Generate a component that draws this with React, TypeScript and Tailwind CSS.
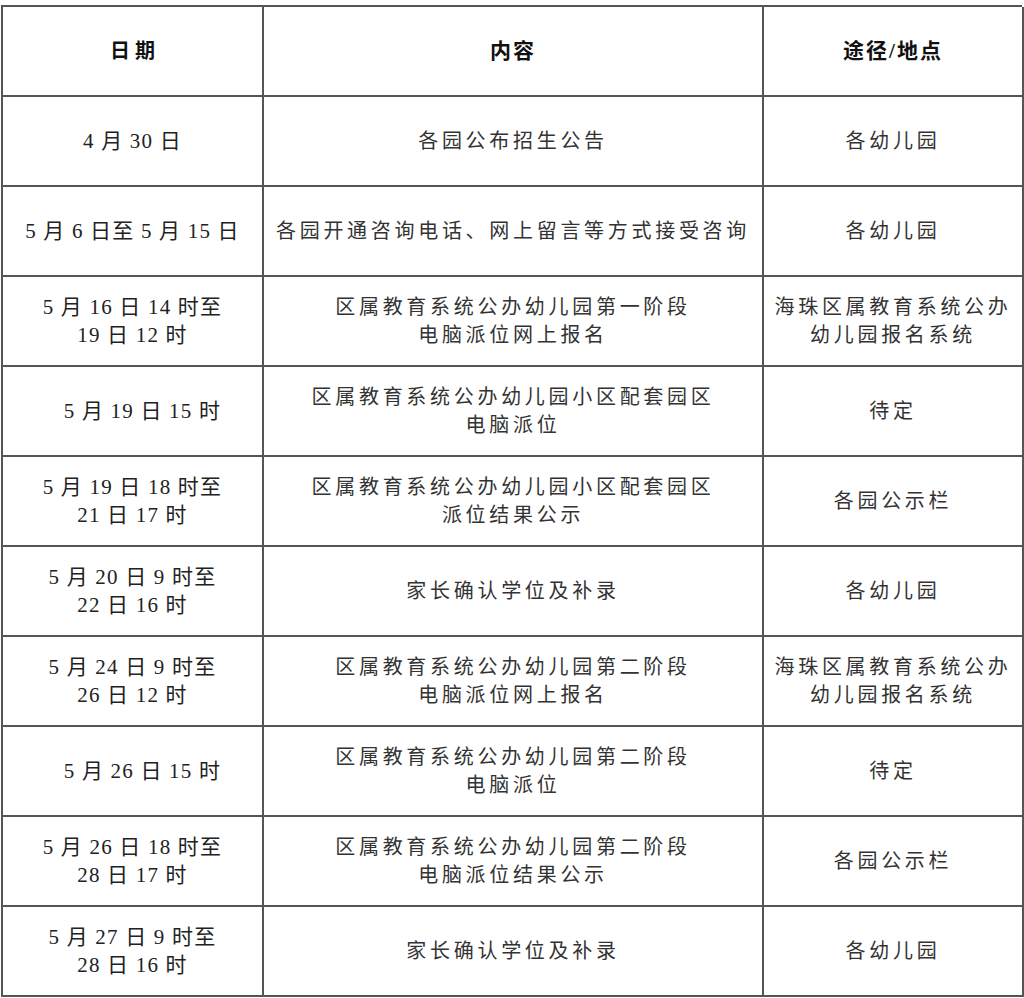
import React from "react";

type Row = { date: string[]; content: string[]; place: string[]; indent?: boolean };

const rows: Row[] = [
  { date: ["4 月 30 日"], content: ["各园公布招生公告"], place: ["各幼儿园"] },
  {
    date: ["5 月 6 日至 5 月 15 日"],
    content: ["各园开通咨询电话、网上留言等方式接受咨询"],
    place: ["各幼儿园"],
  },
  {
    date: ["5 月 16 日 14 时至", "19 日 12 时"],
    content: ["区属教育系统公办幼儿园第一阶段", "电脑派位网上报名"],
    place: ["海珠区属教育系统公办", "幼儿园报名系统"],
  },
  {
    date: ["5 月 19 日 15 时"],
    content: ["区属教育系统公办幼儿园小区配套园区", "电脑派位"],
    place: ["待定"],
    indent: true,
  },
  {
    date: ["5 月 19 日 18 时至", "21 日 17 时"],
    content: ["区属教育系统公办幼儿园小区配套园区", "派位结果公示"],
    place: ["各园公示栏"],
  },
  {
    date: ["5 月 20 日 9 时至", "22 日 16 时"],
    content: ["家长确认学位及补录"],
    place: ["各幼儿园"],
  },
  {
    date: ["5 月 24 日 9 时至", "26 日 12 时"],
    content: ["区属教育系统公办幼儿园第二阶段", "电脑派位网上报名"],
    place: ["海珠区属教育系统公办", "幼儿园报名系统"],
  },
  {
    date: ["5 月 26 日 15 时"],
    content: ["区属教育系统公办幼儿园第二阶段", "电脑派位"],
    place: ["待定"],
    indent: true,
  },
  {
    date: ["5 月 26 日 18 时至", "28 日 17 时"],
    content: ["区属教育系统公办幼儿园第二阶段", "电脑派位结果公示"],
    place: ["各园公示栏"],
  },
  {
    date: ["5 月 27 日 9 时至", "28 日 16 时"],
    content: ["家长确认学位及补录"],
    place: ["各幼儿园"],
  },
];

const Cell = ({ lines, className = "" }: { lines: string[]; className?: string }) => (
  <div
    className={`h-[90px] border-r-2 border-b-2 border-[#555] flex flex-col items-center justify-center text-center whitespace-nowrap ${className}`}
  >
    {lines.map((l, i) => (
      <span key={i} className="block leading-[28px]">
        {l}
      </span>
    ))}
  </div>
);

export default function App() {
  return (
    <div className="min-h-[998px] bg-white pt-[5px] pl-[1px] font-['Liberation_Serif','Noto_Sans_CJK_SC',serif] text-[#222]">
      <div className="grid grid-cols-[261px_500px_260px] w-[1021px] border-l-2 border-t-2 border-[#555]">
        {/* header */}
        <Cell lines={["日期"]} className="font-bold text-[20px] tracking-[5px] pl-[5px] text-[#111]" />
        <Cell lines={["内容"]} className="font-bold text-[21px] tracking-[2px] text-[#111]" />
        <Cell lines={["途径/地点"]} className="font-bold text-[21px] tracking-[2px] text-[#111]" />

        {rows.map((r, i) => (
          <React.Fragment key={i}>
            <Cell
              lines={r.date}
              className={`text-[21px] tracking-[1.2px] ${r.indent ? "pl-[20px]" : ""}`}
            />
            <Cell lines={r.content} className="text-[20px] tracking-[3.7px] text-[#333]" />
            <Cell lines={r.place} className="text-[20px] tracking-[3.7px] text-[#333]" />
          </React.Fragment>
        ))}
      </div>
    </div>
  );
}
